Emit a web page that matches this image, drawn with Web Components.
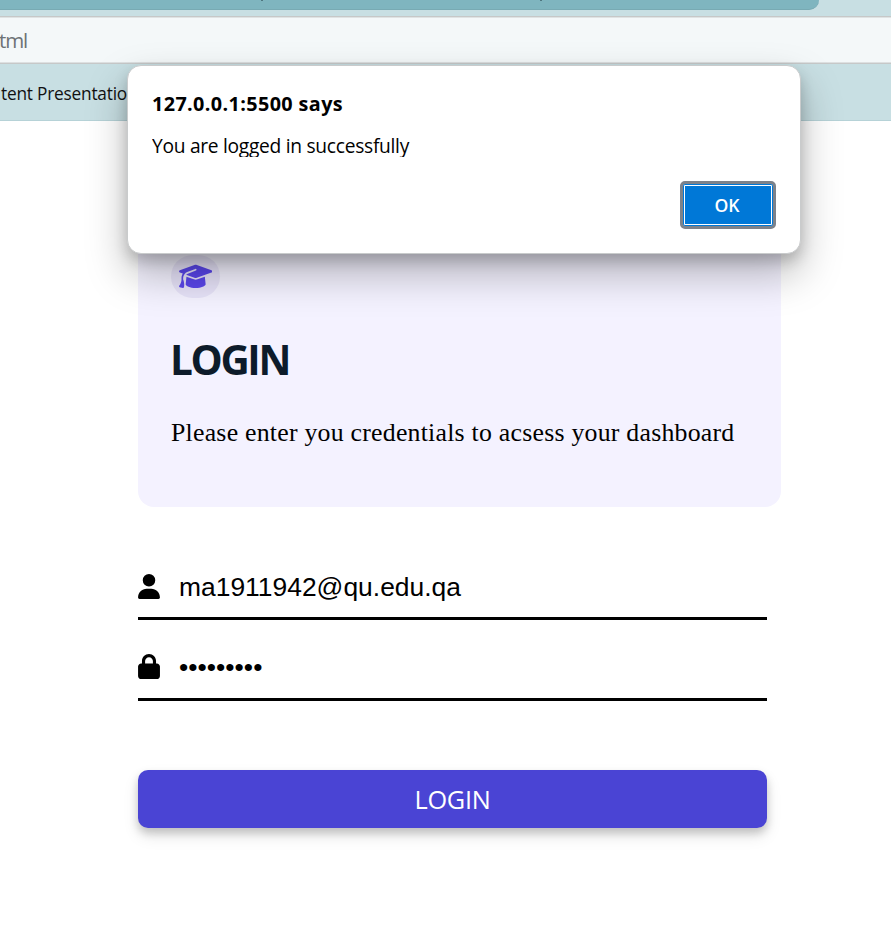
<!DOCTYPE html>
<html lang="en">
<head>
<meta charset="utf-8">
<title>Login</title>
<style>
html,body{margin:0;height:100%;overflow:hidden;background:#fff;color:#000}
</style>
</head>
<body>
<login-app></login-app>
<script>
const define = (name, html, init) => customElements.define(name, class extends HTMLElement {
  connectedCallback() {
    if (this.shadowRoot) return;
    this.attachShadow({mode: 'open'}).innerHTML = html;
    if (init) init(this);
  }
});

// A single line of text whose letter spacing is adjusted to fill a given width.
define('fit-text', `<style>
:host{display:block;white-space:nowrap}
span{display:inline-block}
</style><span><slot></slot></span>`, el => {
  const span = el.shadowRoot.querySelector('span');
  const w = span.getBoundingClientRect().width;
  span.style.letterSpacing = (el.getAttribute('width') - w) / el.textContent.length + 'px';
});

const icons = {
  cap: ['0 0 640 512', 'M320 32c-8.1 0-16.1 1.4-23.7 4.1L15.8 137.4C6.3 140.9 0 149.9 0 160s6.3 19.1 15.8 22.6l57.9 20.9C57.3 229.3 48 259.8 48 291.9v28.1c0 28.4-10.8 57.7-22.3 80.8c-6.5 13-13.9 25.8-22.5 37.6C0 442.7-.9 448.3 .9 453.4s6 8.9 11.2 10.2l64 16c4.2 1.1 8.7 .3 12.4-2s6.3-6.1 7.1-10.4c8.6-42.8 4.3-81.2-2.1-108.7C90.3 344.3 86 329.8 80 316.5V291.9c0-30.2 10.2-58.7 27.9-81.5c12.9-15.5 29.6-28 49.2-35.7l157-61.7c8.2-3.2 17.5 .8 20.7 9s-.8 17.5-9 20.7l-157 61.7c-12.4 4.9-23.3 12.4-32.2 21.6l159.6 57.6c7.6 2.7 15.6 4.1 23.7 4.1s16.1-1.4 23.7-4.1L624.2 182.6c9.5-3.4 15.8-12.5 15.8-22.6s-6.3-19.1-15.8-22.6L343.7 36.1C336.1 33.4 328.1 32 320 32zM128 408c0 35.3 86 72 192 72s192-36.7 192-72L496.7 262.6 354.5 314c-11.1 4-22.8 6-34.5 6s-23.5-2-34.5-6L143.3 262.6 128 408z'],
  user: ['0 0 448 512', 'M224 256A128 128 0 1 0 224 0a128 128 0 1 0 0 256zm-45.7 48C79.8 304 0 383.8 0 482.3C0 498.7 13.3 512 29.7 512H418.3c16.4 0 29.7-13.3 29.7-29.7C448 383.8 368.2 304 269.7 304H178.3z'],
  lock: ['0 0 448 512', 'M144 144v48H304V144c0-44.2-35.8-80-80-80s-80 35.8-80 80zM80 192V144C80 64.5 144.5 0 224 0s144 64.5 144 144v48h16c35.3 0 64 28.7 64 64V448c0 35.3-28.7 64-64 64H64c-35.3 0-64-28.7-64-64V256c0-35.3 28.7-64 64-64H80z']
};
define('app-icon', `<style>:host{display:block}svg{display:block;width:100%;height:100%;fill:currentColor}</style><svg><path/></svg>`, el => {
  const [box, d] = icons[el.getAttribute('name')];
  el.shadowRoot.querySelector('svg').setAttribute('viewBox', box);
  el.shadowRoot.querySelector('path').setAttribute('d', d);
});

define('browser-chrome', `<style>
:host{display:block;height:121px;box-sizing:border-box;background:#c8dfe3;border-bottom:1px solid #b6d2d7;overflow:hidden;font-family:"Open Sans",sans-serif}
.tabs{height:16px}
.tab{height:10px;width:819px;box-sizing:border-box;border-radius:0 0 12px 0;background:#7fb5bf;border-bottom:1px solid #78aab3;display:flex;padding-left:261px;gap:277px}
.tab i{width:2px;height:1px;background:#4f7780}
.address{height:48px;box-sizing:border-box;border:solid #c6c8c8;border-width:1px 0;background:#f4f8f9;box-shadow:inset 0 1px #dfe3e3,inset 0 -1px #dde0e1;color:#6d7276;font-size:20.5px;line-height:46px}
.marks{font-size:17.3px;line-height:57px;margin-left:1px;color:#111;margin-top:1px}
</style>
<div class="tabs"><div class="tab"><i></i><i></i></div></div>
<div class="address"><fit-text width="28" style="margin-left:-1px">tml</fit-text></div>
<div class="marks"><fit-text width="126">tent Presentatio</fit-text></div>`);

define('intro-card', `<style>
:host{display:block;box-sizing:border-box;width:643px;height:287px;padding:35px 33px 0;background:#f4f2ff;border-radius:0 0 16px 16px}
.badge{width:49px;height:43px;border-radius:24px;background:#e6e2f8;display:flex;align-items:center;justify-content:center;color:#5a46ea}
app-icon{width:33.3px;height:26.7px}
h1{margin:32px 0 0;font:700 40.5px/60px "Open Sans",sans-serif;color:#0d1b2a}
p{margin:28px 0 0;font:25.8px/30px "Liberation Serif",serif}
</style>
<div class="badge"><app-icon name="cap"></app-icon></div>
<h1><fit-text width="119" style="margin-left:-1px">LOGIN</fit-text></h1>
<p><fit-text width="563.5">Please enter you credentials to acsess your dashboard</fit-text></p>`);

define('login-field', `<style>
:host{display:flex;box-sizing:border-box;width:629px;align-items:center;border-bottom:3px solid #000;height:66px;font:26.4px/30px "Liberation Sans",sans-serif}
::slotted(app-icon){width:22px;height:25px;margin-right:19px}
</style><slot name="icon"></slot><slot></slot>`);

define('login-button', `<style>
:host{display:block}
button{display:flex;justify-content:center;align-items:center;width:629px;height:58px;padding:0;border:0;border-radius:10px;background:#4a44d4;color:#fff;font:25.3px/36px "Open Sans",sans-serif;box-shadow:0 8px 16px rgba(0,0,0,.1),0 5px 8px rgba(0,0,0,.18)}
</style><button><fit-text width="76">LOGIN</fit-text></button>`);

define('alert-dialog', `<style>
:host{display:block;position:absolute;left:127px;top:65px;width:674px;height:189px;box-sizing:border-box;border:1px solid #c9cbcc;background:#fff;border-radius:14px;padding:23px 24px 0;font-family:"Open Sans",sans-serif;box-shadow:0 20px 42px rgba(0,0,0,.27),0 7px 14px rgba(0,0,0,.18)}
h2{margin:0;font-size:19.8px;line-height:29px}
p{margin:15px 0 0;font-size:19.2px;line-height:26px;height:24px;overflow:hidden}
.row{display:flex;justify-content:flex-end;margin-top:24px}
button{width:96px;height:48px;box-sizing:border-box;border:3px solid #7d828a;border-radius:5px;background:#0078d7;box-shadow:inset 0 0 0 1px #0078d7,inset 0 0 0 2px #fff;color:#fff;font:600 17.6px/24px "Open Sans",sans-serif;padding:0 2px 1px 0;display:flex;align-items:center;justify-content:center}
</style>
<h2><fit-text width="191">127.0.0.1:5500 says</fit-text></h2>
<p><fit-text width="257">You are logged in successfully</fit-text></p>
<div class="row"><button><fit-text width="25">OK</fit-text></button></div>`);

define('login-app', `<style>
:host{display:block;width:891px;height:942px;position:relative;overflow:hidden}
main{padding:99px 0 0 138px;display:flex;flex-direction:column;align-items:flex-start}
.form{margin-top:47px;display:flex;flex-direction:column;gap:15px}
login-field:first-child{padding-top:2px}
login-button{margin-top:69px}
</style>
<browser-chrome></browser-chrome>
<main>
<intro-card></intro-card>
<div class="form">
<login-field><app-icon slot="icon" name="user"></app-icon><fit-text width="282">ma1911942@qu.edu.qa</fit-text></login-field>
<login-field><app-icon slot="icon" name="lock"></app-icon><fit-text width="83.4">•••••••••</fit-text></login-field>
</div>
<login-button></login-button>
</main>
<alert-dialog></alert-dialog>`);
</script>
</body>
</html>
